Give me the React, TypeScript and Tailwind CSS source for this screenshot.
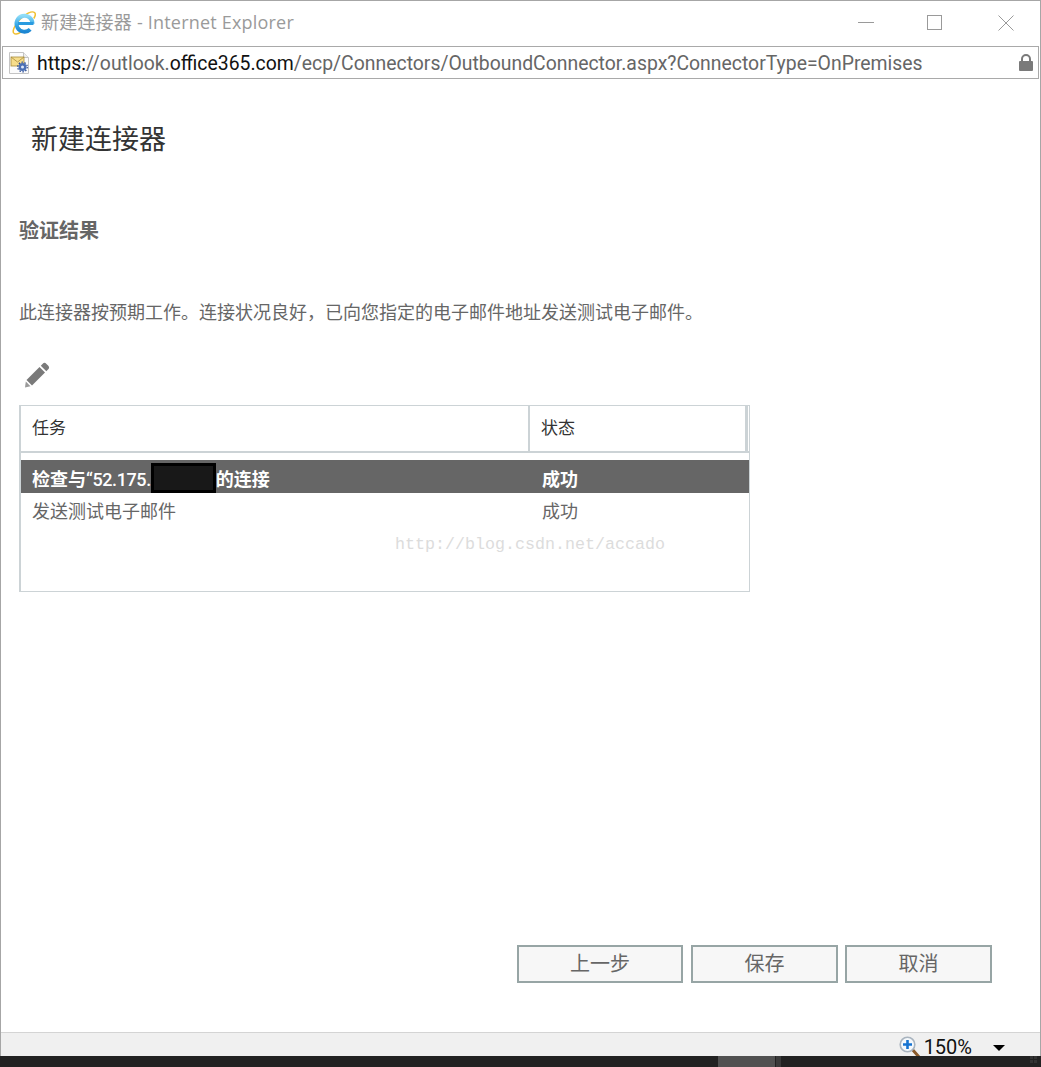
const cjk = "font-['Open_Sans','Noto_Sans_CJK_SC',sans-serif]";

function IeLogo() {
  return (
    <svg width="24" height="24" viewBox="0 0 24 24" className="shrink-0">
      <defs>
        <linearGradient id="ieBlue" x1="0" y1="0" x2="0" y2="1">
          <stop offset="0" stopColor="#8fdcf7" />
          <stop offset="0.55" stopColor="#39a9e6" />
          <stop offset="1" stopColor="#1c86d2" />
        </linearGradient>
      </defs>
      <path d="M1.800 22.200c-1.800-2 .8-8 6-13.700S20 -.5 22.500 1.500c1.300 1.100.8 3.500-.7 6" fill="none" stroke="#f0bf2e" strokeWidth="1.500" />
      <path d="M1.800 22.200c1.500 1.400 4.500.7 7.200-1" fill="none" stroke="#f0bf2e" strokeWidth="1.500" />
      <path d="M20.500 12.800A8 8 0 1 0 18.200 18.300" fill="none" stroke="url(#ieBlue)" strokeWidth="4" />
      <path d="M6 12.500h15.500" stroke="#2a9be0" strokeWidth="3" />
    </svg>
  );
}

function PageIcon() {
  return (
    <svg width="22" height="22" viewBox="0 0 22 22" className="shrink-0">
      <path d="M1.500 .5h14l5 5v16h-19z" fill="#fbfbfb" stroke="#c4c4c4" />
      <path d="M15.500 .5v5h5" fill="#eee" stroke="#c4c4c4" />
      <rect x="3" y="5" width="13" height="9" fill="#f6dd8c" stroke="#a88d3c" strokeWidth="0.8" />
      <path d="M3 5l6.500 5L16 5" fill="none" stroke="#a88d3c" strokeWidth="0.8" />
      <circle cx="14.500" cy="15" r="4" fill="#4a6fb5" />
      <circle cx="14.500" cy="15" r="4.800" fill="none" stroke="#2f4f96" strokeWidth="1.200" strokeDasharray="1.500 1.500" />
      <circle cx="14.500" cy="15" r="1.500" fill="#dfe8f8" />
    </svg>
  );
}

function LockIcon() {
  return (
    <svg width="14" height="17" viewBox="0 0 14 17" className="shrink-0">
      <path d="M3 8V5a4 4 0 0 1 8 0v3" fill="none" stroke="#7a7a7a" strokeWidth="2" />
      <rect x="0" y="7" width="14" height="10" rx="1" fill="#7a7a7a" />
    </svg>
  );
}

function PencilIcon() {
  return (
    <svg width="26" height="26" viewBox="0 0 26 26">
      <path d="M19 1.500c1-1 2.300-.8 3.500.4l1.600 1.600c1.200 1.200 1.300 2.500.4 3.500L22.300 9.200 16.800 3.700z" fill="#7a7a7a" />
      <path d="M15.500 5l5.500 5.500L8 23.500 2.500 18z" fill="#7a7a7a" />
      <path d="M1.800 19.500l4.700 4.700-5.500 1.300z" fill="#9a9a9a" />
    </svg>
  );
}

function ZoomIcon() {
  return (
    <svg width="22" height="23" viewBox="0 0 22 23" className="shrink-0">
      <path d="M13 13l7 8" stroke="#8a5a2b" strokeWidth="3" strokeLinecap="round" />
      <circle cx="8.500" cy="8.500" r="7.300" fill="#f4f8fc" stroke="#a9b4bf" strokeWidth="1.600" />
      <path d="M8.500 4v9M4 8.500h9" stroke="#1673d1" strokeWidth="2.600" />
    </svg>
  );
}

function WindowControls() {
  return (
    <div className="flex items-center ml-auto">
      <div className="w-[16px] h-px bg-[#9a9a9a] mr-[53px]" />
      <div className="w-[15px] h-[15px] border border-[#9a9a9a] mr-[56px]" />
      <svg width="16" height="16" viewBox="0 0 16 16" className="mr-[26px]">
        <path d="M.5.500l15 15M15.500.500l-15 15" stroke="#9a9a9a" strokeWidth="1" fill="none" />
      </svg>
    </div>
  );
}

function FooterButton({ label, width }: { label: string; width: string }) {
  return (
    <button className={`${width} h-[38px] border-2 border-[#97a5a5] bg-[#f7f7f7] text-[20px] leading-none text-[#666]`}>
      {label}
    </button>
  );
}

export default function App() {
  return (
    <div className={`w-[1041px] h-[1067px] flex flex-col bg-white overflow-hidden ${cjk}`}>
      <div className="flex-1 flex flex-col min-h-0 border-t border-x border-[#a6a6a6]">
        {/* title bar */}
        <div className="h-[45px] flex items-center pl-[11px] pb-[2px] shrink-0">
          <IeLogo />
          <span className="ml-[5px] text-[18px] text-[#9a9a9a] tracking-[0.2px]">新建连接器 - Internet Explorer</span>
          <WindowControls />
        </div>

        {/* address bar */}
        <div className="h-[33px] mx-px flex items-center border border-[#a9a9a9] pl-[5px] pr-[5px] shrink-0">
          <PageIcon />
          <div className="ml-[7px] pt-[2px] font-['Roboto','Noto_Sans_CJK_SC',sans-serif] text-[19.4px] whitespace-nowrap text-[#666]">
            <span className="text-[#111]">https:</span>//outlook.<span className="text-[#111]">office365.com</span>
            /ecp/Connectors/OutboundConnector.aspx?ConnectorType=OnPremises
          </div>
          <div className="ml-auto">
            <LockIcon />
          </div>
        </div>

        {/* dialog body */}
        <div className="flex-1 flex flex-col min-h-0 pl-[18px]">
          <h1 className="mt-[38px] ml-[12px] text-[27px] leading-[44px] text-[#333]">新建连接器</h1>
          <h2 className="mt-[56px] text-[20px] leading-[28px] font-bold text-[#666]">验证结果</h2>
          <p className="mt-[53px] text-[18px] leading-[28px] text-[#666]">
            此连接器按预期工作。连接状况良好{"\uff0c"}已向您指定的电子邮件地址发送测试电子邮件。
          </p>
          <div className="mt-[36px] ml-[5px] h-[26px]">
            <PencilIcon />
          </div>

          {/* task table */}
          <div className="relative mt-[17px] w-[731px] h-[187px] border border-[#ccd3d6] border-l-2">
            <div className="h-[47px] flex border-b-2 border-[#ccd3d6] text-[17px] text-[#333]">
              <div className="w-[509px] flex items-center pl-[11px] pb-[2px] border-r-2 border-[#ccd3d6]">任务</div>
              <div className="w-[218px] flex items-center pl-[11px] pb-[2px] border-r-[3px] border-[#ccd3d6]">状态</div>
            </div>
            <div className="mt-[7px] h-[33px] flex items-center bg-[#666] text-[18px] font-bold text-white">
              <div className="w-[510px] pl-[11px] pt-[5px] flex items-center whitespace-nowrap">
                检查与
                <span className="font-['Roboto',sans-serif] font-medium tracking-[-0.4px]">“52.175.</span>
                <span className="inline-block w-[65px] h-[30px] mt-[-3px] border-[3px] border-black bg-[#181818]" />
                的连接
              </div>
              <div className="pl-[11px] pt-[5px]">成功</div>
            </div>
            <div className="h-[36px] flex items-center text-[18px] text-[#666]">
              <div className="w-[510px] pl-[11px]">发送测试电子邮件</div>
              <div className="pl-[11px]">成功</div>
            </div>
            <span className="absolute left-[374px] top-[127px] font-['Liberation_Mono',monospace] text-[16.67px] leading-[24px] text-[#dcdcdc] whitespace-nowrap">
              http://blog.csdn.net/accado
            </span>
          </div>

          {/* footer actions */}
          <div className="mt-auto mb-[49px] mr-[48px] flex justify-end gap-[7px]">
            <FooterButton label="上一步" width="w-[166px] mr-px" />
            <FooterButton label="保存" width="w-[147px]" />
            <FooterButton label="取消" width="w-[147px]" />
          </div>
        </div>

        {/* zoom status bar */}
        <div className="h-[24px] shrink-0 flex items-start justify-end overflow-hidden border-t border-[#d4d4d4] bg-[#f0f0f0]">
          <div className="mt-[3px]">
            <ZoomIcon />
          </div>
          <span className="ml-[3px] font-['Roboto',sans-serif] text-[20px] leading-[28px] text-[#111]">150%</span>
          <div className="ml-[21px] mr-[35px] mt-[12px] w-0 h-0 border-x-[6px] border-t-[6px] border-x-transparent border-t-black" />
        </div>
      </div>

      {/* taskbar strip behind the window */}
      <div className="h-[11px] shrink-0 flex bg-[#222]">
        <div className="ml-[718px] w-[57px] bg-[#515151]" />
        <div className="ml-px w-[5px] bg-[#3a3a3a]" />
        <svg width="8" height="8" viewBox="0 0 8 8" className="ml-auto mr-[3px]">
          <path d="M0 0h3v3H0zM4 0h3v3H4zM0 4h3v3H0zM4 4h3v3H4z" fill="#333" />
        </svg>
      </div>
    </div>
  );
}
